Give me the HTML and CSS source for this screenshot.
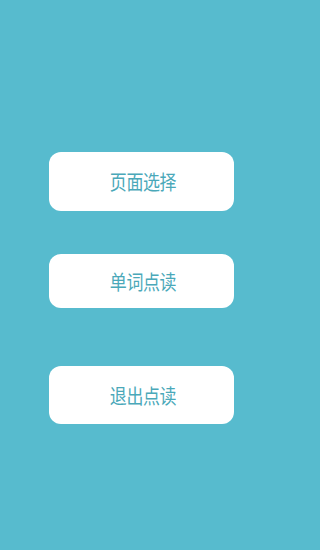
FILE: index.html
```html
<!DOCTYPE html>
<html lang="zh-CN">
<head>
<meta charset="utf-8">
<title>点读</title>
<link rel="stylesheet" href="styles.css">
</head>
<body>
<main class="menu">
  <button class="btn btn-page"><span class="label">页面选择</span></button>
  <button class="btn btn-word"><span class="label">单词点读</span></button>
  <button class="btn btn-exit"><span class="label">退出点读</span></button>
</main>
</body>
</html>
```

FILE: styles.css
```css
html, body {
  margin: 0;
  padding: 0;
  height: 100%;
  background: #57bbce;
  overflow: hidden;
}
.menu {
  display: flex;
  flex-direction: column;
  padding: 152px 0 0 49px;
  width: 185px;
}
.btn {
  display: flex;
  align-items: center;
  justify-content: center;
  width: 185px;
  border: none;
  border-radius: 12px;
  background: #ffffff;
  color: #4aa8b9;
  font-family: "Noto Sans CJK SC", "Noto Sans", sans-serif;
  font-size: 20px;
  font-weight: 400;
  padding: 0 0 0 3px;
}
.label {
  display: inline-block;
  transform: scaleX(0.85);
  letter-spacing: -0.5px;
}
.btn-page { height: 59px; }
.btn-word { height: 54px; margin-top: 43px; }
.btn-exit { height: 58px; margin-top: 58px; }
```
